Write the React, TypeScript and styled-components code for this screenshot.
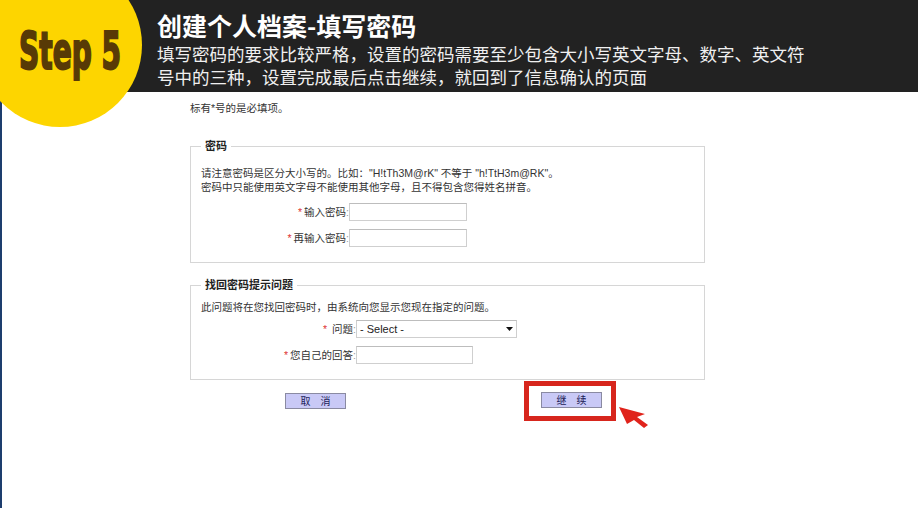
import styled, { createGlobalStyle } from 'styled-components';

const GlobalStyle = createGlobalStyle`
    html, body {
        margin: 0;
        padding: 0;
        background: #fff;
    }
    body {
        width: 918px;
        height: 508px;
        overflow: hidden;
        font-family: "Noto Sans CJK SC", sans-serif;
    }
`;

const Header = styled.header`
    position: relative;
    height: 92px;
    box-sizing: border-box;
    padding: 10px 0 0 157px;
    background: #222;
    color: #fff;
    z-index: 1;
`;

const Badge = styled.div`
    position: absolute;
    left: -22px;
    top: -37px;
    width: 164px;
    height: 164px;
    border-radius: 50%;
    background: #fdd500;
    display: flex;
    align-items: center;
    justify-content: center;
    box-sizing: border-box;
    padding: 12px 0 0 20px;
`;

const BadgeText = styled.span`
    display: block;
    font-family: "DejaVu Sans Condensed", "DejaVu Sans", sans-serif;
    font-weight: bold;
    font-size: 52px;
    line-height: 1;
    color: #583a06;
    -webkit-text-stroke: 2px #583a06;
    transform: scaleX(0.6);
    white-space: nowrap;
`;

const Title = styled.h1`
    margin: 0;
    font-size: 25px;
    line-height: 30px;
    font-weight: bold;
    color: #fff;
`;

const Subtitle = styled.p`
    margin: 2px 0 0;
    font-size: 17.5px;
    line-height: 23px;
    color: #f0f0f0;
`;

const Main = styled.main`
    height: 416px;
    box-sizing: border-box;
    border-left: 2px solid #1d3d6d;
    padding: 9px 0 0 188px;
    font-family: "Liberation Sans", "Noto Sans CJK SC", sans-serif;
    font-size: 10.5px;
    line-height: 14px;
    color: #333;
`;

const Note = styled.div`
    margin-bottom: 24px;
`;

const Box = styled.fieldset<{ $gap: number }>`
    width: 515px;
    box-sizing: border-box;
    margin: 0 0 ${p => p.$gap}px;
    padding: 0;
    border: 1px solid #d6d6d6;
`;

const Legend = styled.legend`
    margin-left: 10px;
    padding: 0 4px;
    font-size: 11px;
    line-height: 14px;
    font-weight: bold;
    color: #222;
`;

const Inner = styled.div<{ $top: number }>`
    padding: ${p => p.$top}px 10px 15px 10px;
`;

const Rows = styled.div<{ $top: number }>`
    display: flex;
    flex-direction: column;
    gap: 8px;
    margin-top: ${p => p.$top}px;
`;

const Row = styled.div`
    display: flex;
    align-items: center;
    height: 18px;
`;

const Label = styled.label<{ $width: number }>`
    width: ${p => p.$width}px;
    text-align: right;
    color: #333;
    white-space: nowrap;
`;

const Star = styled.span`
    color: #d33;
    margin-right: 2px;
`;

const Colon = styled.span`
    color: #999;
`;

const TextInput = styled.input<{ $width: number }>`
    width: ${p => p.$width}px;
    height: 18px;
    box-sizing: border-box;
    margin: 0;
    padding: 0 3px;
    border: 1px solid #cfcfcf;
    border-top-color: #bdbdbd;
    background: #fff;
    outline: none;
`;

const SelectWrap = styled.div`
    position: relative;
    width: 161px;
    height: 18px;
`;

const Select = styled.select`
    width: 100%;
    height: 18px;
    box-sizing: border-box;
    margin: 0;
    padding: 0 0 0 3px;
    appearance: none;
    border: 1px solid #cfcfcf;
    border-top-color: #bdbdbd;
    background: #fff;
    font-family: "Liberation Sans", sans-serif;
    font-size: 11px;
    color: #222;
    outline: none;
`;

const Caret = styled.svg`
    position: absolute;
    right: 4px;
    top: 7px;
    pointer-events: none;
`;

const ButtonRow = styled.div`
    display: flex;
    align-items: center;
    margin-top: 1px;
`;

const FormButton = styled.button<{ $left?: number }>`
    width: 61px;
    height: 16px;
    margin: 0 0 0 ${p => p.$left ?? 0}px;
    padding: 0;
    box-sizing: border-box;
    border: 1px solid #8a8aa2;
    background: #c9c9f6;
    color: #1c1c58;
    font-family: "Noto Sans CJK SC", sans-serif;
    font-size: 10px;
    line-height: 14px;
`;

const Highlight = styled.div`
    position: relative;
    margin-left: 178px;
    border: 5px solid #d7261d;
    padding: 6px 9px 8px 12px;
    display: flex;
`;

const Arrow = styled.svg`
    position: absolute;
    left: 90px;
    top: 21px;
`;

export default function App() {
    return (
        <>
            <GlobalStyle />
            <Header>
                <Badge>
                    <BadgeText>Step 5</BadgeText>
                </Badge>
                <Title>创建个人档案-填写密码</Title>
                <Subtitle>
                    填写密码的要求比较严格，设置的密码需要至少包含大小写英文字母、数字、英文符
                    <br />
                    号中的三种，设置完成最后点击继续，就回到了信息确认的页面
                </Subtitle>
            </Header>
            <Main>
                <Note>标有*号的是必填项。</Note>

                <Box $gap={15}>
                    <Legend>密码</Legend>
                    <Inner $top={13}>
                        <div>请注意密码是区分大小写的。比如："H!tTh3M@rK" 不等于 "h!TtH3m@RK"。</div>
                        <div>密码中只能使用英文字母不能使用其他字母，且不得包含您得姓名拼音。</div>
                        <Rows $top={9}>
                            <Row>
                                <Label $width={148}><Star>*</Star>输入密码<Colon>:</Colon></Label>
                                <TextInput type="password" $width={118} />
                            </Row>
                            <Row>
                                <Label $width={148}><Star>*</Star>再输入密码<Colon>:</Colon></Label>
                                <TextInput type="password" $width={118} />
                            </Row>
                        </Rows>
                    </Inner>
                </Box>

                <Box $gap={0}>
                    <Legend>找回密码提示问题</Legend>
                    <Inner $top={8}>
                        <div>此问题将在您找回密码时，由系统向您显示您现在指定的问题。</div>
                        <Rows $top={6}>
                            <Row>
                                <Label $width={155}><Star>*</Star> 问题<Colon>:</Colon></Label>
                                <SelectWrap>
                                    <Select defaultValue="">
                                        <option value="">- Select -</option>
                                    </Select>
                                    <Caret width="7" height="4" viewBox="0 0 7 4">
                                        <polygon points="0,0 7,0 3.5,4" fill="#111" />
                                    </Caret>
                                </SelectWrap>
                            </Row>
                            <Row>
                                <Label $width={155}><Star>*</Star>您自己的回答<Colon>:</Colon></Label>
                                <TextInput type="text" $width={117} />
                            </Row>
                        </Rows>
                    </Inner>
                </Box>

                <ButtonRow>
                    <FormButton $left={95}>取　消</FormButton>
                    <Highlight>
                        <FormButton>继　续</FormButton>
                        <Arrow width="30" height="22" viewBox="0 0 30 22">
                            <polygon points="0,0 26,7 18,10 29,18 25,21 15,13 8,17" fill="#e0231b" />
                        </Arrow>
                    </Highlight>
                </ButtonRow>
            </Main>
        </>
    );
}
